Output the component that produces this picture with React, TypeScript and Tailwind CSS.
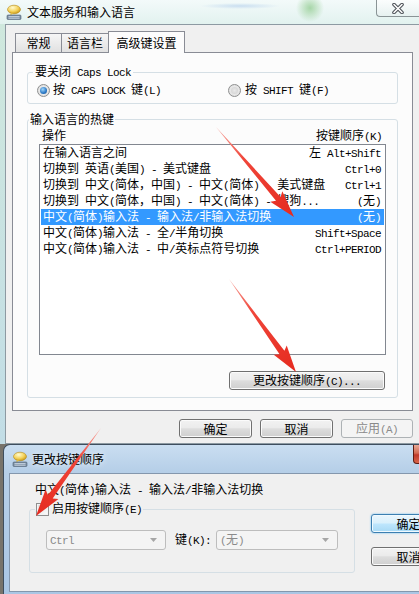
import React from 'react'

const rows = [
  ['在输入语言之间', '左 Alt+Shift'],
  ['切换到 英语(美国) - 美式键盘', 'Ctrl+0'],
  ['切换到 中文(简体，中国) - 中文(简体) - 美式键盘', 'Ctrl+1'],
  ['切换到 中文(简体，中国) - 中文(简体) - 搜狗...', '(无)'],
  ['中文(简体)输入法 - 输入法/非输入法切换', '(无)'],
  ['中文(简体)输入法 - 全/半角切换', 'Shift+Space'],
  ['中文(简体)输入法 - 中/英标点符号切换', 'Ctrl+PERIOD'],
]

// latin runs in SimSun are 6px wide, so swap them to a narrow mono
function T({ s }: { s: string }) {
  const parts = s.split(/([\x20-\x7E]+)/).filter(Boolean)
  return (
    <span className="whitespace-pre">
      {parts.map((p, i) =>
        /^[\x20-\x7E]+$/.test(p) ? (
          <span key={i} className="font-[Liberation_Mono,monospace] text-[11px] tracking-[-0.6px]">
            {p}
          </span>
        ) : (
          <span key={i}>{p}</span>
        )
      )}
    </span>
  )
}

function BubbleIcon() {
  return (
    <svg width="16" height="16" viewBox="0 0 16 16">
      <defs>
        <radialGradient id="bub" cx="40%" cy="30%" r="70%">
          <stop offset="0" stopColor="#fffbd0" />
          <stop offset="0.6" stopColor="#f4d25a" />
          <stop offset="1" stopColor="#c99a1c" />
        </radialGradient>
      </defs>
      <ellipse cx="8" cy="5.5" rx="6.5" ry="4.3" fill="url(#bub)" stroke="#b58a1a" strokeWidth="0.6" />
      <path d="M5 9 L4 11.5 L7.5 9.6 Z" fill="#e8c040" />
      <rect x="1" y="11" width="14" height="4.5" rx="1" fill="#7d8fa3" stroke="#4f6275" strokeWidth="0.6" />
      <path d="M2.5 12.6 H13.5 M2.5 14.2 H13.5" stroke="#d7e2ee" strokeWidth="0.8" />
    </svg>
  )
}

function Btn({ children, w, kind }: { children: React.ReactNode; w: string; kind?: 'off' | 'def' }) {
  let cls =
    'border-[#707070] bg-[linear-gradient(#f2f2f2_0%,#ebebeb_45%,#dddddd_52%,#cfcfcf_100%)] shadow-[inset_0_0_0_1px_#fbfbfb]'
  if (kind === 'off') cls = 'border-[#adb2b5] bg-[#f4f4f4] text-[#8a8a8a]'
  if (kind === 'def')
    cls =
      'border-[#3c7fb1] bg-[linear-gradient(#eaf6fd_0%,#d9f0fc_48%,#bee6fd_52%,#a7d9f5_100%)] shadow-[0_0_2px_#5cb8f0,inset_0_0_0_1px_#f0faff]'
  return (
    <div className={`${w} h-[19px] shrink-0 flex items-center justify-center border rounded-[3px] ${cls}`}>
      {children}
    </div>
  )
}

function Radio({ on }: { on?: boolean }) {
  return (
    <div className="w-[13px] h-[13px] shrink-0 rounded-full border border-[#8e8f8f] bg-[radial-gradient(circle,#f7f7f7,#d9d9d9)] flex items-center justify-center">
      {on ? (
        <div className="w-[7px] h-[7px] rounded-full bg-[radial-gradient(circle_at_40%_35%,#9fd6fb,#2a77c4_60%,#14508f)]" />
      ) : (
        <div className="w-[7px] h-[7px] rounded-full bg-[radial-gradient(circle,#e9e9e9,#cfcfcf)]" />
      )}
    </div>
  )
}

function Combo({ w, text }: { w: string; text: string }) {
  return (
    <div className={`${w} h-[20px] shrink-0 flex items-center justify-between border border-[#bdbdbd] rounded-[3px] bg-[#f4f4f4] pl-[3px] pr-[8px] text-[#8a8a8a]`}>
      <T s={text} />
      <svg width="7" height="4" viewBox="0 0 7 4">
        <path d="M0 0 H7 L3.5 4 Z" fill="#a6a6a6" />
      </svg>
    </div>
  )
}

function arrow(x1: number, y1: number, x2: number, y2: number) {
  const dx = x2 - x1
  const dy = y2 - y1
  const L = Math.hypot(dx, dy)
  const ux = dx / L
  const uy = dy / L
  const px = -uy
  const py = ux
  const head = 24
  const bx = x2 - ux * head
  const by = y2 - uy * head
  const s = 3
  const hw = 8
  const nx = bx - ux * 3
  const ny = by - uy * 3
  const pts = [
    [x1, y1],
    [bx + px * s, by + py * s],
    [nx + px * hw, ny + py * hw],
    [x2, y2],
    [nx - px * hw, ny - py * hw],
    [bx - px * s, by - py * s],
  ]
  return pts.map((p) => p.join(',')).join(' ')
}

function Arrows() {
  const list = [
    [216, 127, 294, 217],
    [229, 279, 296, 372],
    [101, 428, 36, 516],
  ]
  return (
    <svg className="absolute inset-0 pointer-events-none" width="419" height="594">
      {list.map(([a, b, c, d], i) => (
        <g key={i}>
          <defs>
            <linearGradient id={`ar${i}`} gradientUnits="userSpaceOnUse" x1={a} y1={b} x2={c} y2={d}>
              <stop offset="0" stopColor="#f7a8a0" />
              <stop offset="0.35" stopColor="#f0463a" />
              <stop offset="1" stopColor="#e52a1f" />
            </linearGradient>
          </defs>
          <polygon points={arrow(a, b, c, d)} fill={`url(#ar${i})`} />
        </g>
      ))}
    </svg>
  )
}

export default function App() {
  return (
    <div className="relative w-[419px] h-[594px] overflow-hidden flex flex-col bg-[#77736b] font-[Noto_Sans_CJK_SC,sans-serif] text-[12px] leading-[16px] text-black">
      {/* main window */}
      <div className="h-[444px] shrink-0 flex flex-col bg-[#c6e2da]">
        <div className="h-[24px] shrink-0 flex items-center bg-[radial-gradient(circle_at_310px_8px,#a7d6a8_0,transparent_14px),radial-gradient(ellipse_at_240px_6px,#c9def0_0,transparent_40px),linear-gradient(#f3fafa,#e2f2ef)]">
          <div className="ml-[6px]">
            <BubbleIcon />
          </div>
          <span className="ml-[5px] [text-shadow:0_0_6px_#ffffff]">文本服务和输入语言</span>
          <div className="ml-auto self-start w-[43px] h-[17px] border-l border-b border-[#8a9496] rounded-bl-[4px] bg-[linear-gradient(#ffffffaa,#e6eeee88)] flex items-center justify-center">
            <svg width="12" height="11" viewBox="0 0 12 11">
              <path d="M2 1.5 L10 9.5 M10 1.5 L2 9.5" stroke="#4a4f55" strokeWidth="3.6" strokeLinecap="round" />
              <path d="M2 1.5 L10 9.5 M10 1.5 L2 9.5" stroke="#ffffff" strokeWidth="1.6" strokeLinecap="round" />
            </svg>
          </div>
        </div>
        <div className="flex flex-1">
          <div className="w-[5px] shrink-0 bg-[linear-gradient(#cfe8dd,#c2dde6)]" />
          <div className="flex-1 flex flex-col bg-[#f0f0f0] border-l border-t border-b border-[#8d9aa2] px-[6px] pt-[6px]">
            {/* tabs */}
            <div className="flex items-end h-[21px] pl-[3px]">
              <div className="w-[47px] h-[19px] flex items-center justify-center border border-b-0 border-[#898c95] bg-[linear-gradient(#f6f6f6,#e1e1e1)]">
                常规
              </div>
              <div className="-ml-[1px] w-[48px] h-[19px] flex items-center justify-center border border-b-0 border-[#898c95] bg-[linear-gradient(#f6f6f6,#e1e1e1)]">
                语言栏
              </div>
              <div className="-ml-[1px] -mb-[1px] relative z-10 w-[77px] h-[22px] flex items-center justify-center border border-b-0 border-[#898c95] bg-[#fcfcfc]">
                高级键设置
              </div>
            </div>
            {/* panel */}
            <div className="h-[359px] border border-[#898c95] bg-[#fcfcfc] px-[14px] pt-[10px]">
              <fieldset className="border border-[#d5dfe5] rounded-[3px]">
                <legend className="ml-[5px] px-[2px]">
                  <T s="要关闭 Caps Lock" />
                </legend>
                <div className="flex items-center h-[14px] mt-[2px] ml-[9px] mb-[6px]">
                  <div className="flex items-center w-[191px]">
                    <Radio on />
                    <span className="ml-[3px]">
                      <T s="按 CAPS LOCK 键(L)" />
                    </span>
                  </div>
                  <div className="flex items-center">
                    <Radio />
                    <span className="ml-[4px]">
                      <T s="按 SHIFT 键(F)" />
                    </span>
                  </div>
                </div>
              </fieldset>

              <fieldset className="mt-[7px] border border-[#d5dfe5] rounded-[3px]">
                <legend className="ml-[1px] px-[1px]">输入语言的热键</legend>
                <div className="px-[11px] pb-[7px] flex flex-col">
                  <div className="flex justify-between h-[16px] pl-[3px] pr-[4px]">
                    <span>操作</span>
                    <T s="按键顺序(K)" />
                  </div>
                  <div className="mt-[1px] h-[211px] border border-[#828790] bg-white">
                    {rows.map(([a, b], i) => (
                      <div
                        key={i}
                        className={`mx-[1px] h-[16px] leading-[14px] flex items-start justify-between pl-[2px] pr-[3px] ${
                          i === 4 ? 'bg-[#3399ff] text-white' : ''
                        }`}
                      >
                        <T s={a} />
                        <T s={b} />
                      </div>
                    ))}
                  </div>
                  <div className="mt-[16px] ml-auto mr-[1px]">
                    <Btn w="w-[156px]">
                      <T s="更改按键顺序(C)..." />
                    </Btn>
                  </div>
                </div>
              </fieldset>
            </div>
            <div className="flex justify-end gap-[8px] mt-[8px]">
              <Btn w="w-[73px]">确定</Btn>
              <Btn w="w-[73px]">取消</Btn>
              <Btn w="w-[72px]" kind="off">
                <T s="应用(A)" />
              </Btn>
            </div>
          </div>
        </div>
      </div>

      {/* change key sequence dialog */}
      <div className="flex-1 ml-[3px] flex flex-col rounded-tl-[7px] border-l border-t border-[#3e4e5e] bg-[linear-gradient(#cadef1,#b6cfe8_26px,#aac6e4)]">
        <div className="h-[28px] shrink-0 flex items-center">
          <div className="ml-[8px]">
            <BubbleIcon />
          </div>
          <span className="ml-[4px] [text-shadow:0_0_6px_#ffffff]">更改按键顺序</span>
          <div className="ml-auto self-start w-[44px] -mr-[38px] h-[19px] rounded-b-[4px] border border-t-0 border-[#5c1b12] bg-[linear-gradient(#e9a996,#d36a52_45%,#c0392b_55%,#d8664b)]" />
        </div>
        <div className="flex-1 mb-[2px] ml-[5px] flex border-l border-t border-b border-[#8497ad] bg-[#f0f0f0]">
          <div className="pl-[19px] pt-[7px] flex flex-col">
            <div className="ml-[6px] h-[16px]">
              <T s="中文(简体)输入法 - 输入法/非输入法切换" />
            </div>
            <fieldset className="mt-[3px] w-[326px] border border-[#d5dfe5] rounded-[3px] pb-[22px]">
              <legend className="ml-[5px] px-[1px]">
                <div className="flex items-center">
                  <div className="w-[13px] h-[13px] border border-[#8f8f8f] bg-[linear-gradient(135deg,#dcdcdc,#fdfdfd)] shadow-[inset_0_0_0_1px_#f4f4f4]" />
                  <span className="ml-[3px]">
                    <T s="启用按键顺序(E)" />
                  </span>
                </div>
              </legend>
              <div className="mt-[12px] ml-[16px] flex items-center">
                <Combo w="w-[120px]" text="Ctrl" />
                <span className="ml-[9px] w-[41px] shrink-0">
                  <T s="键(K):" />
                </span>
                <Combo w="w-[122px]" text="(无)" />
              </div>
            </fieldset>
          </div>
          <div className="ml-[16px] pt-[40px] flex flex-col">
            <Btn w="w-[75px]" kind="def">
              确定
            </Btn>
            <div className="mt-[14px]">
              <Btn w="w-[75px]">取消</Btn>
            </div>
          </div>
        </div>
      </div>

      <Arrows />
    </div>
  )
}
